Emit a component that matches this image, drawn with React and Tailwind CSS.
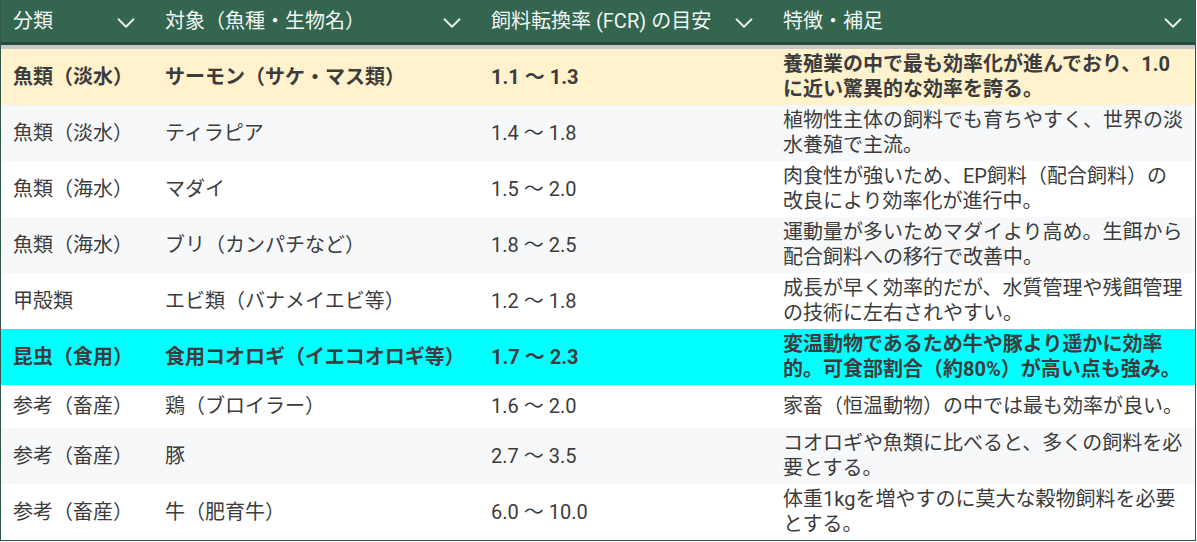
import React from 'react';
import { ChevronDown } from 'lucide-react';

const columns = ['分類', '対象（魚種・生物名）', '飼料転換率 (FCR) の目安', '特徴・補足'];

const rows = [
  {
    group: '魚類（淡水）',
    name: 'サーモン（サケ・マス類）',
    fcr: '1.1 ～ 1.3',
    note: '養殖業の中で最も効率化が進んでおり、1.0に近い驚異的な効率を誇る。',
    highlight: 'bg-[#fff2cc] font-bold',
  },
  {
    group: '魚類（淡水）',
    name: 'ティラピア',
    fcr: '1.4 ～ 1.8',
    note: '植物性主体の飼料でも育ちやすく、世界の淡水養殖で主流。',
  },
  {
    group: '魚類（海水）',
    name: 'マダイ',
    fcr: '1.5 ～ 2.0',
    note: '肉食性が強いため、EP飼料（配合飼料）の改良により効率化が進行中。',
  },
  {
    group: '魚類（海水）',
    name: 'ブリ（カンパチなど）',
    fcr: '1.8 ～ 2.5',
    note: '運動量が多いためマダイより高め。生餌から配合飼料への移行で改善中。',
  },
  {
    group: '甲殻類',
    name: 'エビ類（バナメイエビ等）',
    fcr: '1.2 ～ 1.8',
    note: '成長が早く効率的だが、水質管理や残餌管理の技術に左右されやすい。',
  },
  {
    group: '昆虫（食用）',
    name: '食用コオロギ（イエコオロギ等）',
    fcr: '1.7 ～ 2.3',
    note: '変温動物であるため牛や豚より遥かに効率的。可食部割合（約80%）が高い点も強み。',
    highlight: 'bg-[#00ffff] font-bold',
  },
  {
    group: '参考（畜産）',
    name: '鶏（ブロイラー）',
    fcr: '1.6 ～ 2.0',
    note: '家畜（恒温動物）の中では最も効率が良い。',
  },
  {
    group: '参考（畜産）',
    name: '豚',
    fcr: '2.7 ～ 3.5',
    note: 'コオロギや魚類に比べると、多くの飼料を必要とする。',
  },
  {
    group: '参考（畜産）',
    name: '牛（肥育牛）',
    fcr: '6.0 ～ 10.0',
    note: '体重1kgを増やすのに莫大な穀物飼料を必要とする。',
  },
];

const grid = 'grid grid-cols-[152px_326px_292px_1fr]';

export default function App() {
  return (
    <div
      className="w-[1197px] h-[542px] bg-white overflow-hidden"
      style={{ fontFamily: 'Roboto, "Noto Sans CJK JP", sans-serif' }}
    >
      <div className="w-[1196px] border border-t-0 border-[#2f5646]">
        {/* Header */}
        <div className={`${grid} h-[45px] bg-[#33654f] border-b-[3px] border-[#274b3c] text-[#f1f5f3] text-[20px]`}>
          {columns.map((c, i) => (
            <div
              key={c}
              className={`flex items-center justify-between pl-3 ${i === 3 ? 'pr-[7px]' : 'pr-[12px]'}`}
            >
              <span className="whitespace-nowrap">{c}</span>
              <ChevronDown className="w-[30px] h-[30px] text-[#e6eeea] mt-[3px]" strokeWidth={1.5} />
            </div>
          ))}
        </div>
        <div className="h-[4px] bg-[#c8c8c8]" />

        {/* Body */}
        {rows.map((r, i) => {
          const bg = r.highlight ? r.highlight : i % 2 === 1 ? 'bg-[#f6f8fa]' : 'bg-white';
          return (
            <div
              key={i}
              className={`${grid} ${bg} min-h-[43px] text-[20px] leading-[25px] text-[#3c3c3c]`}
            >
              <div className="flex items-center pl-3 py-[3px]">{r.group}</div>
              <div className="flex items-center pl-3 py-[3px]">{r.name}</div>
              <div className="flex items-center pl-3 py-[3px]">{r.fcr}</div>
              <div className="flex items-center pl-3 pr-3 py-[3px]">
                <span className="w-[401px]">{r.note}</span>
              </div>
            </div>
          );
        })}
      </div>
    </div>
  );
}
